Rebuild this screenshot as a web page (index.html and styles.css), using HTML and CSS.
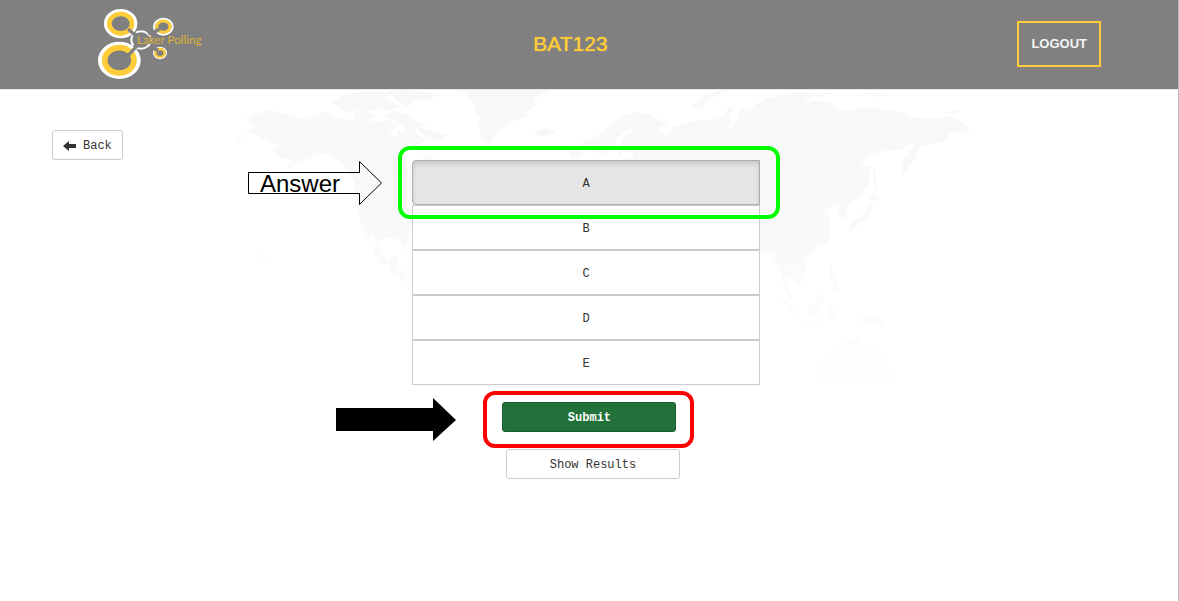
FILE: index.html
```
<!DOCTYPE html>
<html lang="en">
<head>
<meta charset="utf-8">
<meta name="viewport" content="width=device-width, initial-scale=1">
<title>Laker Polling</title>
<link rel="stylesheet" href="styles.css">
</head>
<body>
<div class="page">
  <header class="header">
    <a class="logo" href="#" aria-label="Laker Polling home">
      <svg width="106" height="70" viewBox="54 24 318 210" aria-hidden="true">
        <g fill="none">
          <ellipse cx="183" cy="117" rx="29" ry="26" stroke="#fff" stroke-width="6"/>
          <path d="M158 94l15 13M158 142l15-12M204 98l20-12M206 139l18 10M209 107v22" stroke="#808080" stroke-width="11"/>
          <ellipse cx="122" cy="68" rx="50" ry="44" fill="#fff"/>
          <ellipse cx="122" cy="68" rx="34" ry="29" fill="#808080" stroke="#ffcd38" stroke-width="14"/>
          <ellipse cx="118" cy="178" rx="64" ry="56" fill="#fff"/>
          <ellipse cx="118" cy="178" rx="44" ry="38" fill="#808080" stroke="#ffcd38" stroke-width="17"/>
          <path d="M144 84l28 24M144 164l28-31" stroke="#808080" stroke-width="10"/>
          <ellipse cx="250" cy="77" rx="28" ry="24" stroke="#fff" stroke-width="6"/>
          <ellipse cx="250" cy="77" rx="20" ry="17" stroke="#ffcd38" stroke-width="9"/>
          <ellipse cx="240" cy="156" rx="19" ry="17" stroke="#fff" stroke-width="4"/>
          <ellipse cx="240" cy="156" rx="14" ry="12" stroke="#ffcd38" stroke-width="7"/>
          <path d="M238 84l-24 16M234 148l-20-10" stroke="#808080" stroke-width="11"/>
        </g>
        <text class="logo-text" x="171" y="128">Laker Polling</text>
      </svg>
    </a>
    <h1 class="title">BAT123</h1>
    <button class="logout" type="button">LOGOUT</button>
  </header>

  <main class="main">
    <svg class="map" width="800" height="330" viewBox="220 0 800 330" aria-hidden="true">
      <defs>
        <linearGradient id="land" gradientUnits="userSpaceOnUse" x1="0" y1="0" x2="0" y2="930">
          <stop offset="0" stop-color="#f8f8f8"/>
          <stop offset=".45" stop-color="#f9f9f9"/>
          <stop offset="1" stop-color="#fefefe"/>
        </linearGradient>
      </defs>
      <g transform="translate(220 -2) scale(.333333)" fill="url(#land)">
        <path d="M75 128l30-12-28-22 38-18 30-9 65 12 55 16 20-14 35-10 30 15 45 10 40-8 28 14 45-7 20 18-20 25 18 8 8-22 14 15 12-28 20 3 8 22 28 22-22 15-36 14-12 20 6 28 22 12 22 20 10-20-4-30 22-14 30 14 14 18 20-5 14 28 30 20-22 16-34 8-24 14 12 20-40 22-18 34-36 22-8 40-10 34-12-32-30-8-34 8-14 32 12 36 24 6 14-20 22-2-6 30 18 10 14 24 22 8 32-3 40 22v40l-24-14-30-30-46-16-40-24-14-46-34-54-16-20 8 38-28-50-16-48-12-52 2-40-22-36-24-32-36-16-30-4-24 14-34 14-36 20 22-24-38-10-26-22 14-16z"/>
        <path d="M335 42l35-20 50-10 50-2 46 8-30 14 36 10 14 16-36 12-28-10-34 12-36-8-22 10-18-14zM398 72l36-6 30 14-22 16-34-4zM490 82l30-14 40 10 36 22 30 14-28 4 84 24-30 18-36-14-24-26-50-10zM505 8l50-2 60 6 40 10-34 14-40 2-18 18-32-14z"/>
        <path d="M700 6L735 14 760 45 766 72 782 86 774 110 790 155 810 168 830 132 852 120 890 95 930 84 914 74 950 50 940 32 990 6z"/>
        <path d="M944 132l24-12 34 6 2 10-30 10-26-4zM1042 182l22-14 24 12-2 22-30 14zM1036 230l18-8 14 28-26 12zM48 150l12-2 6 8-10 2zM116 495l10 10 18 12-6 2-20-14z"/>
      </g>
      <g transform="translate(600 -2) scale(.333333)" fill="url(#land)">
        <path d="M-60 180L-50 158-10 148 5 132 30 112 50 92 75 82 110 72 150 80 200 106 204 118 176 116 186 136 200 142 222 116 260 104 290 97 340 95 375 80 386 54 402 60 388 84 392 104 376 118 398 120 406 96 420 90 436 112 428 92 412 84 422 58 450 74 462 52 500 32 540 24 600 10 646 18 604 46 650 38 690 44 730 68 790 60 850 64 920 75 934 86 1000 90 1050 85 1084 102 1113 122 1085 134 1058 128 1042 142 1046 158 1000 165 960 175 945 210 910 258 904 226 930 185 955 158 900 185 850 188 800 206 780 230 812 236 806 290 780 324 758 340 740 358 742 376 728 396 712 378 718 352 700 350 674 370 692 384 686 402 694 440 680 465 640 490 606 510 618 545 600 590 565 562 556 576 580 640 552 604 544 550 522 510 515 495 478 498 300 480 100 300 60 214 100 212 98 194 70 190 56 212 52 182 72 146 106 126 84 124 52 150 34 176 10 200-20 190z"/>
        <path d="M276 56L290 40 310 24 350 10 390 8 350 22 320 38 306 62 286 64zM640 20l40-8 20 6-40 8zM780 18l40-4 36 6-30 6zM1040 74l40-8 4 6-30 6z"/>
        <path d="M745 430L750 406 782 388 805 350 818 355 806 395 775 410zM806 332L820 315 838 328 820 342zM818 240L826 242 832 304 824 300zM690 530L698 532 696 552 714 576 706 584 718 604 704 612 688 560zM606 512L620 510 622 518 610 522z"/>
        <path d="M540 625L565 645 598 694 584 692zM620 660L640 650 665 615 674 640 652 685 626 680zM684 660L712 656 700 670 706 694 688 694zM762 676L800 684 840 690 862 718 826 710 790 708zM645 850L690 800 730 765 770 745 790 780 815 790 825 760 850 810 882 855 860 890 800 880 740 870 670 890zM600 706L660 712 664 718 606 714z"/>
      </g>
    </svg>

    <button class="btn back" type="button">
      <svg width="13" height="11" viewBox="0 0 13 11" aria-hidden="true"><path d="M0 5L6 0v3h7v4H6v3z" fill="#333"/></svg>
      Back
    </button>

    <div class="poll">
      <div class="options" role="group" aria-label="Answers">
        <button class="option active" type="button" aria-pressed="true">A</button>
        <button class="option" type="button" aria-pressed="false">B</button>
        <button class="option" type="button" aria-pressed="false">C</button>
        <button class="option" type="button" aria-pressed="false">D</button>
        <button class="option" type="button" aria-pressed="false">E</button>
        <span class="callout callout-answer"></span>
        <svg class="arrow arrow-answer" width="135" height="45" viewBox="247 161 135 45">
          <path d="M248.500 172.500h111v-11l22 21.500-22 21.500v-11h-111z" fill="none" stroke="#000"/>
          <text class="arrow-text" x="260" y="192">Answer</text>
        </svg>
      </div>
      <div class="submit-row">
        <button class="btn submit" type="submit">Submit</button>
        <span class="callout callout-submit"></span>
        <svg class="arrow arrow-submit" width="120" height="44" viewBox="0 0 120 44" aria-hidden="true">
          <path d="M0 10h97V0l23 22-23 21V33H0z"/>
        </svg>
      </div>
      <button class="btn results" type="button">Show Results</button>
    </div>
  </main>
</div>
</body>
</html>
```
FILE: styles.css
```
* {
  box-sizing: border-box;
}

body {
  margin: 0;
  background: #fff;
  color: #333;
  font-family: "Liberation Mono", monospace;
  font-size: 12px;
  line-height: 16px;
}

button {
  margin: 0;
  font: inherit;
  color: inherit;
  cursor: pointer;
}

.page {
  min-height: 100vh;
  border-right: 1px solid #bbb;
}

.header {
  display: grid;
  grid-template-columns: 1fr auto 1fr;
  align-items: center;
  padding: 9px 77px 10px 40px;
  border-bottom: 1px solid #e7e7e7;
  background: #808080;
}

.logo {
  display: flex;
  margin-left: 58px;
}

.logo-text {
  font-family: Lato, sans-serif;
  font-size: 35px;
  fill: #dcb03a;
}

.title {
  margin: 0;
  color: #ffcd38;
  font-family: "Liberation Sans", Arial, sans-serif;
  font-size: 21px;
  font-weight: 400;
  line-height: 24px;
  text-shadow: 0 0 1px #ffcd38;
}

.logout {
  justify-self: end;
  padding: 13px 12px;
  border: 2px solid #ffcd38;
  background: transparent;
  color: #f5f5f5;
  font-family: "Liberation Sans", Arial, sans-serif;
  font-size: 13px;
  font-weight: 700;
}

.main {
  position: relative;
  display: grid;
  grid-template-columns: 30fr 29fr 30fr;
  align-items: start;
  padding: 40px 58px 24px 52px;
}

.map {
  position: absolute;
  top: 0;
  left: 50%;
  margin-left: -369px;
  z-index: -1;
}

.btn {
  padding: 7px 10px 5px;
  border: 1px solid #ccc;
  border-radius: 3px;
  background: #fff;
}

.back {
  display: flex;
  align-items: center;
  justify-self: start;
  gap: 7px;
}

.poll {
  grid-column: 2;
  padding-top: 30px;
}

.options {
  position: relative;
  display: flex;
  flex-direction: column;
}

.option {
  padding: 15px 12px 12px;
  border: 1px solid #ccc;
  background: #fff;
}

.option.active {
  border-color: #adadad;
  border-radius: 4px 0 0 4px;
  background: #e6e6e6;
  box-shadow: inset 0 3px 5px rgba(0, 0, 0, 0.13);
}

.submit-row {
  position: relative;
  width: 50%;
  margin: 17px 0 17px 26%;
}

.submit {
  display: block;
  width: 100%;
  border-color: #1b5a2e;
  background: #22713a;
  color: #fff;
  font-weight: 700;
}

.results {
  display: block;
  width: 50%;
  margin-left: 27%;
}

.callout {
  position: absolute;
  border: 4px solid;
  border-radius: 12px;
  pointer-events: none;
}

.callout-answer {
  top: -14px;
  left: -14px;
  right: -20px;
  height: 73px;
  border-color: #0f0;
}

.callout-submit {
  inset: -11px -18px -16px -19px;
  border-color: #f00;
}

.arrow {
  position: absolute;
}

.arrow-answer {
  top: 1px;
  right: 100%;
  margin-right: 30px;
}

.arrow-submit {
  top: -4px;
  right: 100%;
  margin-right: 46px;
}

.arrow-text {
  font-family: "Liberation Sans", Arial, sans-serif;
  font-size: 24px;
}
```
